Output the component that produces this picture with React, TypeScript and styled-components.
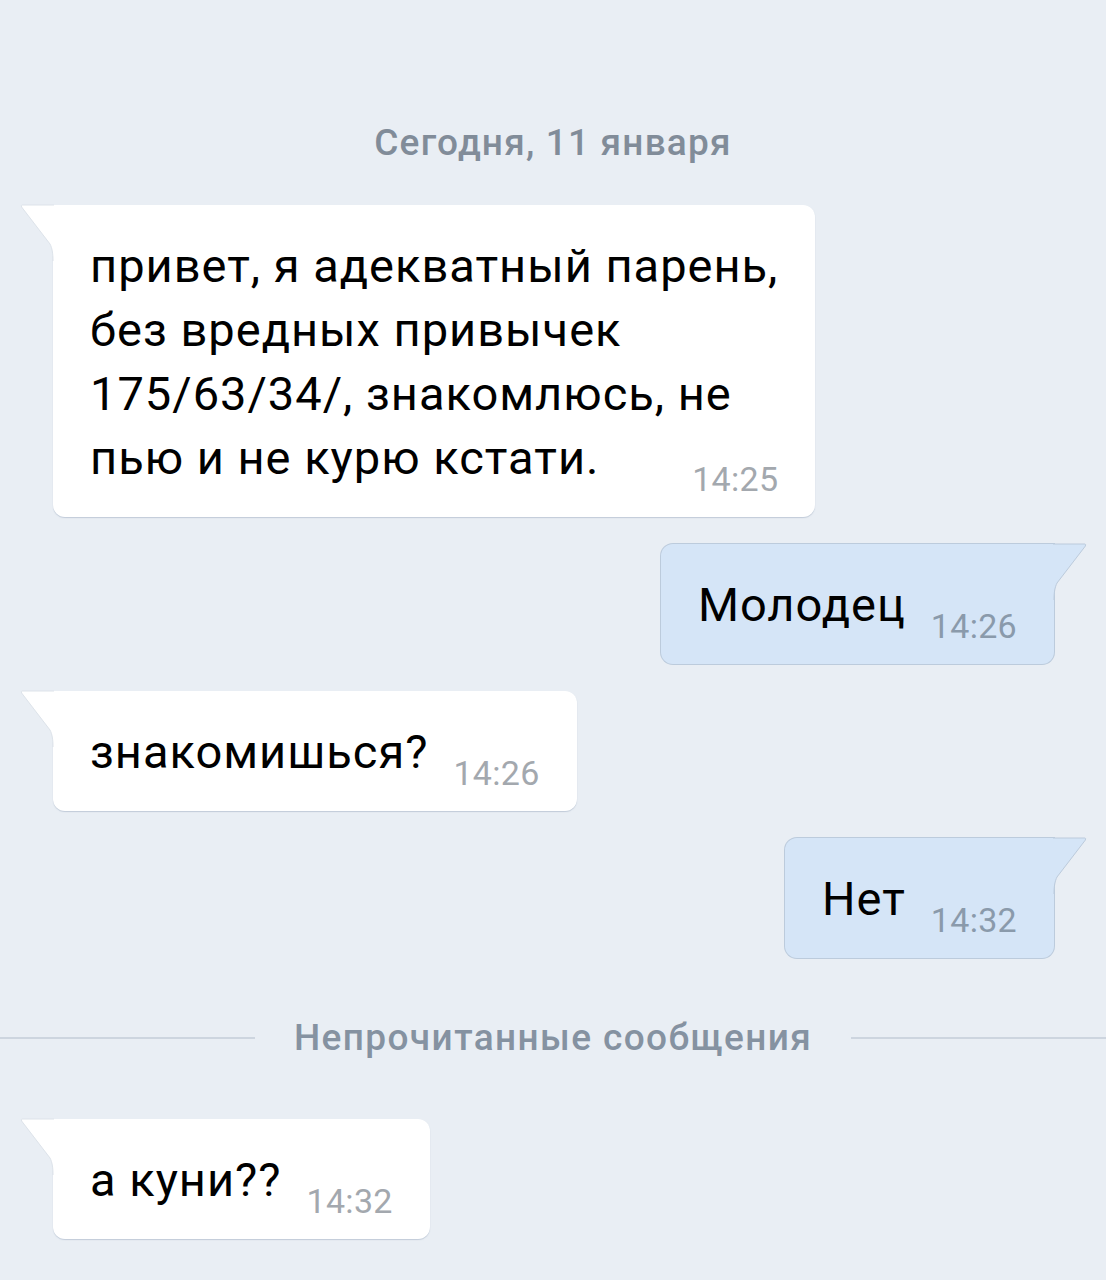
import React from "react";
import styled, { createGlobalStyle } from "styled-components";

const GlobalStyle = createGlobalStyle`
  html, body { margin: 0; padding: 0; background: #e9eef4; }
  body { font-family: Roboto, "Noto Sans", "Liberation Sans", sans-serif; }
`;

const Page = styled.div`
  width: 1106px;
  min-height: 1280px;
  background: #e9eef4;
  display: flex;
  flex-direction: column;
  padding-top: 118px;
  box-sizing: border-box;
`;

const DateLabel = styled.div`
  text-align: center;
  font-size: 37px;
  font-weight: 500;
  letter-spacing: 1.2px;
  color: #818c99;
  line-height: 50px;
  margin-bottom: 37px;
`;

const Row = styled.div<{ $out?: boolean }>`
  display: flex;
  justify-content: ${(p) => (p.$out ? "flex-end" : "flex-start")};
  padding: 0 52px 0 53px;
  margin-bottom: 27px;
`;

const Bubble = styled.div<{ $out?: boolean }>`
  position: relative;
  box-sizing: border-box;
  padding: 29px 37px 27px 37px;
  border-radius: ${(p) => (p.$out ? "12px 0 12px 12px" : "0 12px 12px 12px")};
  background: ${(p) => (p.$out ? "#d5e5f7" : "#ffffff")};
  box-shadow: ${(p) =>
    p.$out ? "0 0 0 1px #bccbdc" : "0 1px 1px rgba(160, 175, 195, 0.55)"};
  display: flex;
  flex-direction: column;
`;

const Lines = styled.div`
  font-size: 47px;
  letter-spacing: 1px;
  line-height: 64px;
  color: #000;
  white-space: pre-line;
`;

const LastRow = styled.div`
  display: flex;
  justify-content: space-between;
  align-items: flex-end;
  column-gap: 25px;
`;

const Time = styled.span<{ $out?: boolean }>`
  flex: none;
  font-size: 34px;
  letter-spacing: 0.3px;
  line-height: 40px;
  color: ${(p) => (p.$out ? "#8a9aab" : "#a3a8ae")};
  margin-bottom: -9px;
`;

const Tail = styled.svg<{ $out?: boolean }>`
  position: absolute;
  top: 0;
  width: 33px;
  height: 56px;
  overflow: visible;
  ${(p) => (p.$out ? "right: -32px; transform: scaleX(-1);" : "left: -32px;")}
`;

const Divider = styled.div`
  display: flex;
  align-items: center;
  gap: 39px;
  margin: 28px 0 56px;
`;

const Line = styled.div`
  flex: 1;
  height: 2px;
  background: #cdd5df;
`;

const DividerText = styled.span`
  font-size: 37px;
  font-weight: 500;
  letter-spacing: 1.4px;
  color: #8592a1;
  line-height: 50px;
`;

function BubbleTail({ out }: { out?: boolean }) {
  const fill = out ? "#d5e5f7" : "#ffffff";
  const stroke = out ? "#bccbdc" : "#dde3ea";
  return (
    <Tail $out={out} viewBox="0 0 33 56">
      <path
        d="M1 0 H33 V56 H32 C32 48 31 43 29 39 L0.6 2 Q0 0 1 0 Z"
        fill={fill}
      />
      <path
        d="M33 0 H1 Q0 0 0.6 2 L29 39 C31 43 32 48 32 56"
        fill="none"
        stroke={stroke}
        strokeWidth="1"
      />
    </Tail>
  );
}

type Msg = { lines: string[]; time: string; out?: boolean };

function Message({ lines, time, out }: Msg) {
  const head = lines.slice(0, -1);
  const last = lines[lines.length - 1];
  return (
    <Row $out={out}>
      <Bubble $out={out}>
        <BubbleTail out={out} />
        {head.length > 0 && <Lines>{head.join("\n")}</Lines>}
        <LastRow>
          <Lines>{last}</Lines>
          <Time $out={out}>{time}</Time>
        </LastRow>
      </Bubble>
    </Row>
  );
}

export default function App() {
  return (
    <>
      <GlobalStyle />
      <Page>
        <DateLabel>Сегодня, 11 января</DateLabel>
        <Message
          lines={[
            "привет, я адекватный парень,",
            "без вредных привычек",
            "175/63/34/, знакомлюсь, не",
            "пью и не курю кстати.",
          ]}
          time="14:25"
        />
        <Message out lines={["Молодец"]} time="14:26" />
        <Message lines={["знакомишься?"]} time="14:26" />
        <Message out lines={["Нет"]} time="14:32" />
        <Divider>
          <Line />
          <DividerText>Непрочитанные сообщения</DividerText>
          <Line />
        </Divider>
        <Message lines={["а куни??"]} time="14:32" />
      </Page>
    </>
  );
}
